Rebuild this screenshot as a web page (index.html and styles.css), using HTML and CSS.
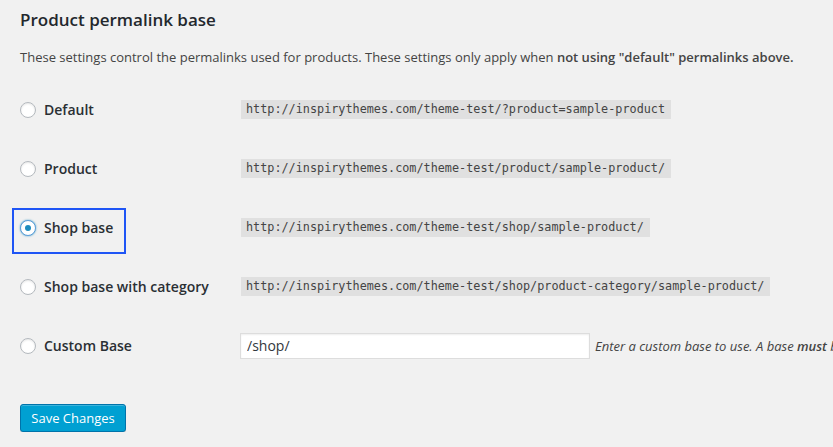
FILE: index.html
```html
<!DOCTYPE html>
<html>
<head>
<meta charset="utf-8">
<link rel="stylesheet" href="styles.css">
</head>
<body>
<div class="wrap">
  <h2 class="title">Product permalink base</h2>
  <p class="intro">These settings control the permalinks used for products. These settings only apply when <strong>not using "default" permalinks above.</strong></p>
  <div class="rows">
    <div class="row">
      <label class="opt"><span class="radio"></span>Default</label>
      <div class="val"><code>http://inspirythemes.com/theme-test/?product=sample-product</code></div>
    </div>
    <div class="row">
      <label class="opt"><span class="radio"></span>Product</label>
      <div class="val"><code>http://inspirythemes.com/theme-test/product/sample-product/</code></div>
    </div>
    <div class="row">
      <label class="opt focus"><span class="radio checked"></span>Shop base</label>
      <div class="val"><code>http://inspirythemes.com/theme-test/shop/sample-product/</code></div>
    </div>
    <div class="row">
      <label class="opt"><span class="radio"></span>Shop base with category</label>
      <div class="val"><code>http://inspirythemes.com/theme-test/shop/product-category/sample-product/</code></div>
    </div>
    <div class="row">
      <label class="opt"><span class="radio"></span>Custom Base</label>
      <div class="val clip"><input class="text" type="text" value="/shop/"><span class="desc">Enter a custom base to use. A base <strong>must</strong> be set or WordPress will use default instead.</span></div>
    </div>
  </div>
  <div class="submit"><button class="btn">Save Changes</button></div>
</div>
</body>
</html>
```
FILE: styles.css
```css
html, body {
  margin: 0;
  padding: 0;
  background: #f1f1f1;
  overflow: hidden;
}
body {
  font-family: "Open Sans", "Liberation Sans", sans-serif;
  color: #444;
  font-size: 13px;
}
.wrap {
  padding-left: 20px;
  width: 813px;
  white-space: nowrap;
}
.title {
  margin: 0;
  padding-top: 9px;
  font-size: 17px;
  line-height: 22px;
  font-weight: 600;
  color: #23282d;
}
.intro {
  margin: 16px 0 0;
  font-size: 13px;
  line-height: 20px;
}
.intro strong {
  font-weight: 600;
}
.rows {
  margin-top: 13px;
}
.row {
  height: 59px;
  display: flex;
  align-items: center;
}
.opt {
  width: 220px;
  flex: none;
  display: flex;
  align-items: center;
  font-size: 14px;
  font-weight: 600;
  line-height: 19px;
  color: #2a2f34;
}
.opt.focus {
  position: relative;
}
.opt.focus::after {
  content: "";
  position: absolute;
  left: -8px;
  top: -10px;
  width: 110px;
  height: 42px;
  border: 2px solid #1f55f5;
}
.radio {
  width: 16px;
  height: 16px;
  box-sizing: border-box;
  border-radius: 50%;
  border: 1px solid #b4b9be;
  background: #fff;
  box-shadow: inset 0 1px 2px rgba(0,0,0,.1);
  margin-right: 8px;
  display: flex;
  align-items: center;
  justify-content: center;
  flex: none;
}
.radio.checked {
  border-color: #5b9dd9;
  box-shadow: 0 0 2px rgba(30,140,190,.8);
}
.radio.checked::before {
  content: "";
  width: 6px;
  height: 6px;
  border-radius: 50%;
  background: #1e8cbe;
}
.val {
  display: flex;
  align-items: center;
}
.val.clip {
  width: 593px;
  overflow: hidden;
}
code {
  font-family: "DejaVu Sans Mono", "Liberation Mono", monospace;
  font-size: 11.8px;
  line-height: 15px;
  padding: 2px 6px 2px 5px;
  background: rgba(0,0,0,.07);
  color: #444;
  margin-left: 1px;
}
.text {
  width: 350px;
  height: 26px;
  flex: none;
  box-sizing: border-box;
  border: 1px solid #ddd;
  box-shadow: inset 0 1px 2px rgba(0,0,0,.07);
  background: #fff;
  font-family: "Open Sans", "Liberation Sans", sans-serif;
  font-size: 14px;
  color: #32373c;
  padding: 0 6px;
  margin: 0;
  outline: none;
}
.desc {
  margin-left: 5px;
  font-style: italic;
  font-size: 13px;
}
.desc strong {
  font-weight: 600;
}
.submit {
  margin-top: 29px;
}
.btn {
  height: 28px;
  width: 106px;
  padding: 0 10px 1px;
  background: #00a0d2;
  border: 1px solid #0073aa;
  border-radius: 3px;
  box-shadow: inset 0 1px 0 rgba(120,200,230,.5), 0 1px 0 rgba(0,0,0,.15);
  color: #fff;
  font-family: "Open Sans", "Liberation Sans", sans-serif;
  font-size: 13px;
  line-height: 26px;
}
```
